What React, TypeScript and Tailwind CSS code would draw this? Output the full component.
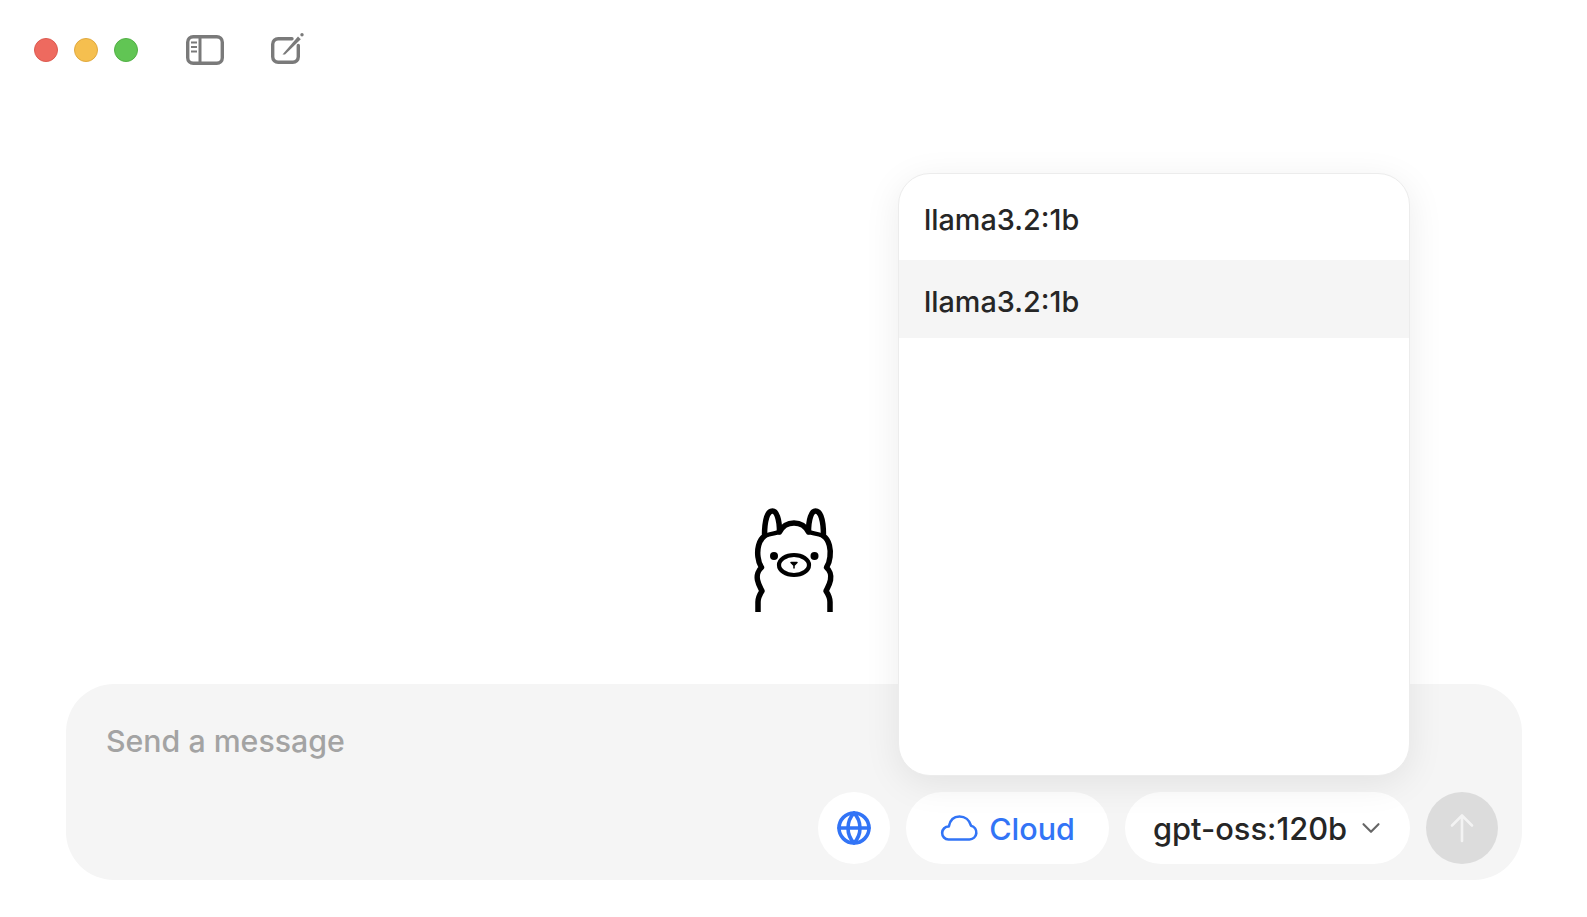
import { ChevronDown, Globe } from "lucide-react";

function SidebarIcon() {
  return (
    <svg width="38" height="30" viewBox="0 0 38 30" fill="none" stroke="#7a7a7a" strokeWidth="3.400">
      <rect x="1.700" y="1.700" width="34.600" height="26.600" rx="5.500" />
      <path d="M14 2V28" strokeWidth="3" />
      <path d="M5 7.500H11M5 12H11M5 16.500H11" strokeWidth="2" />
    </svg>
  );
}

function ComposeIcon() {
  return (
    <svg width="33" height="33" viewBox="0 0 33 33" fill="none" stroke="#7a7a7a" strokeWidth="3.400">
      <path d="M21 5.700H7.200a5.500 5.500 0 0 0-5.500 5.500v12.600a5.500 5.500 0 0 0 5.500 5.500h14.600a5.500 5.500 0 0 0 5.500-5.500V12.500" strokeLinecap="round" />
      <path d="M11.500 21.500L27 3.500L29.800 6.300L14 21.500Z" fill="#7a7a7a" stroke="none" />
      <circle cx="31" cy="1.800" r="1.700" fill="#7a7a7a" stroke="none" />
    </svg>
  );
}

function CloudIcon() {
  return (
    <svg width="38" height="26" viewBox="0 0 38 26" fill="none" stroke="#3274f6" strokeWidth="2.600" strokeLinejoin="round">
      <path d="M8.500 24.500H29.500a7 7 0 0 0 1.500-13.800C29.500 5 25 1.500 19.500 1.500C14 1.500 10 5 8.800 11.500A6.500 6.500 0 0 0 8.500 24.500Z" />
    </svg>
  );
}

function SendArrow() {
  return (
    <svg width="24" height="30" viewBox="0 0 24 30" fill="none" stroke="#f3f3f3" strokeWidth="2.600" strokeLinecap="round" strokeLinejoin="round">
      <path d="M12 2.500V28M2 12.500L12 2.500L22 12.500" />
    </svg>
  );
}

function Llama() {
  const half =
    "M63.500 33C70 33 75 36 78 42C78 29 81 21 85 21C90 21 93 30 93 46C99 50 100.500 60 99.500 67C99 72 97.500 75 96 77.500C99 80 101 85 100 90C99 95 97 98 95.500 101C97.500 104 99.500 108 99.500 112V122";
  return (
    <svg width="120" height="130" viewBox="3.500 0 120 130" fill="none" stroke="#000" strokeWidth="5.500" strokeLinejoin="round">
      <path d={half} />
      <path d={half} transform="matrix(-1 0 0 1 127 0)" />
      <path d="M78 42C80 43 87 43.500 93 46M49 42C47 43 40 43.500 34 46" strokeWidth="4.500" />
      <circle cx="43.500" cy="66" r="4" fill="#000" stroke="none" />
      <circle cx="84" cy="66" r="4" fill="#000" stroke="none" />
      <ellipse cx="63.500" cy="75" rx="15" ry="10" strokeWidth="4.200" />
      <path d="M60.500 72.500H66.500L63.500 75.500ZM63.500 75V78.500" fill="#000" strokeWidth="1.500" />
    </svg>
  );
}

export default function App() {
  return (
    <div className="flex h-[917px] w-full flex-col bg-white font-['Inter',sans-serif] font-[450] text-[#262626]">
      <header className="flex h-[100px] shrink-0 items-center pb-[1px] pl-[34px]">
        <div className="flex gap-4">
          <span className="h-6 w-6 rounded-full border border-[#dc5a50] bg-[#ee6a5f]" />
          <span className="h-6 w-6 rounded-full border border-[#e0a93f] bg-[#f5bf4f]" />
          <span className="h-6 w-6 rounded-full border border-[#52b045] bg-[#61c554]" />
        </div>
        <button className="ml-[48px] flex"><SidebarIcon /></button>
        <button className="ml-[47px] flex"><ComposeIcon /></button>
      </header>

      <main className="flex flex-1 items-end justify-center pb-[64px]">
        <Llama />
      </main>

      <div className="mb-[37px] pr-[65px] pl-[66px]">
        <div className="relative flex h-[196px] flex-col rounded-[48px] bg-[#f5f5f5] pt-[36px] pr-[24px] pb-[16px] pl-[40px]">
          <textarea
            rows={1}
            placeholder="Send a message"
            className="h-[42px] w-[700px] resize-none bg-transparent text-[30.300px] leading-[42px] outline-none placeholder:text-[#a3a3a3]"
          />
          <div className="mt-auto flex items-center justify-end gap-4">
            <button className="flex h-[72px] w-[72px] items-center justify-center rounded-full bg-white text-[#3274f6]">
              <Globe size={36} strokeWidth={2.400} />
            </button>
            <button className="flex h-[72px] w-[203px] items-center justify-center gap-[11px] rounded-full bg-white text-[30.500px] text-[#3274f6]">
              <CloudIcon />
              <span className="pt-[2px]">Cloud</span>
            </button>
            <button className="flex h-[72px] w-[285px] items-center rounded-full bg-white pl-[28px] text-[30.800px]">
              <span className="pt-[2px]">gpt-oss:120b</span>
              <ChevronDown size={30} strokeWidth={1.700} className="ml-[9px] text-[#666666]" />
            </button>
            <button className="flex h-[72px] w-[72px] items-center justify-center rounded-full bg-[#dcdcdc]">
              <SendArrow />
            </button>
          </div>

          <div className="absolute right-[112px] bottom-[104px] h-[603px] w-[512px] overflow-hidden rounded-[32px] border border-[#ececec] bg-white text-[28.800px] shadow-[0_8px_36px_rgba(0,0,0,0.08)]">
            <div className="flex h-[86px] items-center pt-[5px] pl-[25px]">llama3.2:1b</div>
            <div className="flex h-[78px] items-center bg-[#f5f5f5] pt-[5px] pl-[25px]">llama3.2:1b</div>
          </div>
        </div>
      </div>
    </div>
  );
}
